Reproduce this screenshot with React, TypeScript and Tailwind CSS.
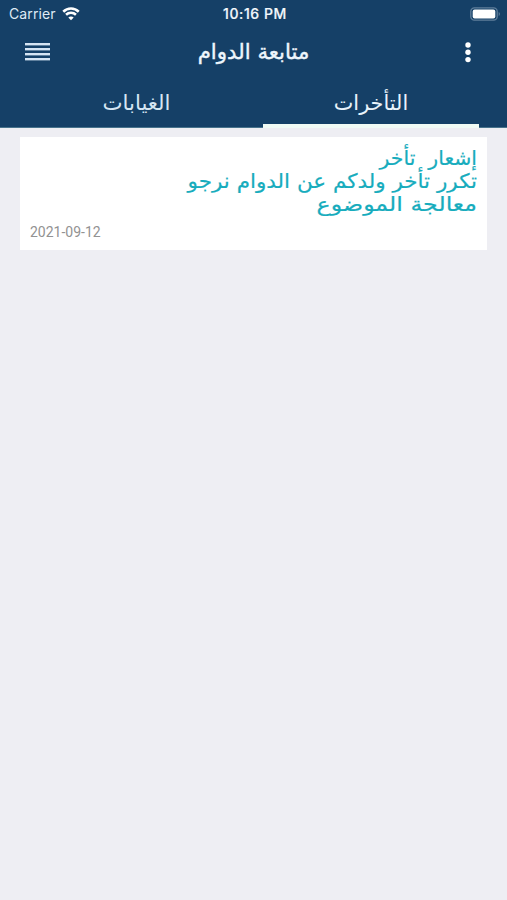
const bars = [0, 5, 10, 15];
const dots = [3, 10.3, 17.6];

function StatusBar() {
  return (
    <div className="grid h-[27px] grid-cols-3 items-center pl-[9px] pr-[6px] font-['Inter'] text-white">
      <div className="flex items-center gap-[6px]">
        <span className="text-[14px] leading-[27px] tracking-[0.1px] text-[#dfeaf5]">Carrier</span>
        <svg width="18" height="14" viewBox="0 0 19 15" fill="none" stroke="#fff" strokeWidth="2.7">
          <path d="M1.2 5.1C5.8.5 13.2.5 17.8 5.1" />
          <path d="M4.2 8.3c2.9-2.9 7.7-2.9 10.6 0" />
          <path d="M9.5 14.2 6.6 11.3c1.6-1.5 4.2-1.5 5.8 0z" fill="#fff" stroke="none" />
        </svg>
      </div>
      <div className="text-center text-[14px] font-medium leading-[27px] tracking-[0.6px] whitespace-nowrap text-[#f2f8fc] [-webkit-text-stroke:0.2px_#f2f8fc]">
        10:16 PM
      </div>
      <div className="flex items-center justify-end">
        <svg width="31" height="14" viewBox="0 0 31 14">
          <rect x="0.8" y="0.8" width="26.4" height="12.4" rx="3.6" fill="none" stroke="#5f7e9b" strokeWidth="1.3" />
          <rect x="2.7" y="2.5" width="22.6" height="9" rx="2" fill="#fff" />
          <path d="M28.7 5v4c1.6-.5 1.6-3.5 0-4" fill="#5f7e9b" />
        </svg>
      </div>
    </div>
  );
}

function TitleBar() {
  return (
    <div className="grid h-[50px] grid-cols-[80px_1fr_80px] items-center">
      <button className="ml-[25px] w-[25px]" aria-label="menu">
        <svg width="25" height="18" viewBox="0 0 25 18" className="block" fill="#d5e4f3">
          {bars.map((y) => (
            <rect key={y} y={y} width="25" height="2.4" />
          ))}
        </svg>
      </button>
      <h1 dir="rtl" className="text-center text-[21.3px] leading-[48px] text-[#eef6fc] [-webkit-text-stroke:0.4px_#eef6fc]">
        متابعة الدوام
      </h1>
      <button className="ml-[38px] w-[6px]" aria-label="more">
        <svg width="6" height="21" viewBox="0 0 6 21" className="block" fill="#fff">
          {dots.map((y) => (
            <circle key={y} cx="3" cy={y} r="2.7" />
          ))}
        </svg>
      </button>
    </div>
  );
}

function Tabs() {
  return (
    <div dir="rtl" className="flex h-[51px] gap-[18px] border-b border-[#47738c] px-[28px]">
      <div className="-mb-px h-[51px] w-[216px] border-b-4 border-[#f0fbf5] text-center text-[20.8px] leading-[53px] text-[#e8f3fb]">
        التأخرات
      </div>
      <div className="w-[217px] text-center text-[21.3px] leading-[51px] text-[#d5e6f3]">الغيابات</div>
    </div>
  );
}

function NoticeCard() {
  return (
    <article className="ml-[20px] mt-[9px] h-[113px] w-[467px] bg-white px-[10px] pt-[10px]">
      <div dir="rtl" className="text-[20px] leading-[23px] text-[#17acbd] [-webkit-text-stroke:0.2px_#17acbd]">
        <p className="h-[23px] origin-right scale-x-[1.02] whitespace-pre">إشعار  تأخر</p>
        <p className="h-[23px] origin-right scale-x-[1.074] whitespace-nowrap">تكرر تأخر ولدكم عن الدوام نرجو</p>
        <p className="h-[23px] origin-right scale-x-[1.185] whitespace-nowrap">معالجة الموضوع</p>
      </div>
      <time className="mt-[6px] block font-['Roboto'] text-[14px] leading-[20px] text-[#929292]">2021-09-12</time>
    </article>
  );
}

export default function App() {
  return (
    <main className="h-[900px] w-[507px] overflow-hidden bg-[#eeeef3] font-['DejaVu_Sans',sans-serif]">
      <header className="h-[128px] bg-[#154067]">
        <StatusBar />
        <TitleBar />
        <Tabs />
      </header>
      <NoticeCard />
    </main>
  );
}
